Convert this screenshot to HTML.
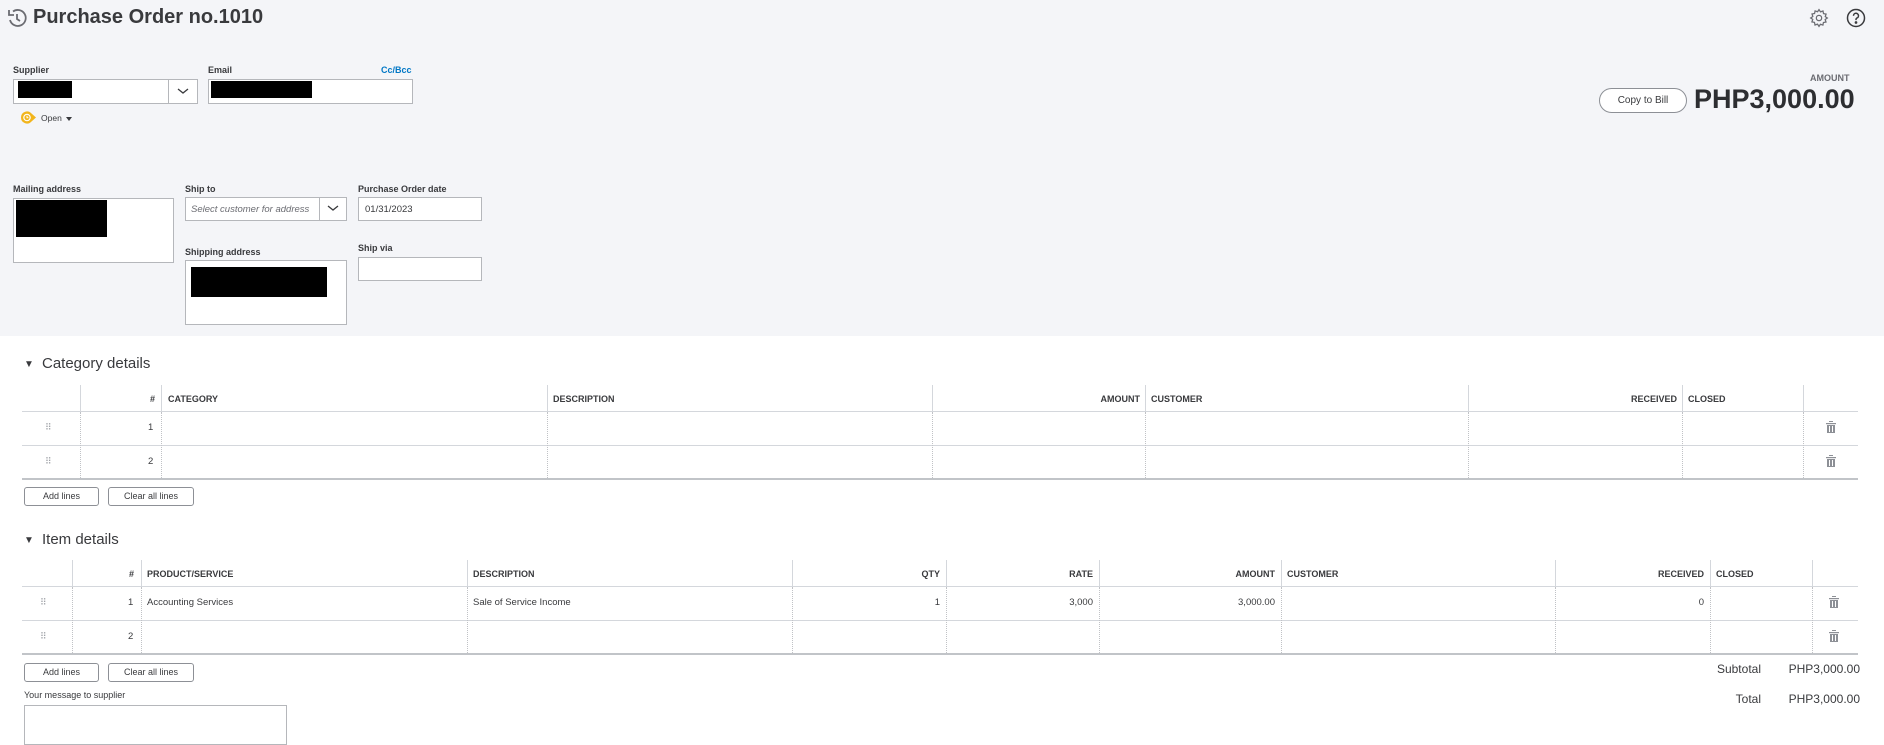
<!DOCTYPE html>
<html><head><meta charset="utf-8"><style>
*{box-sizing:border-box;margin:0;padding:0}
body{width:1884px;height:731px;overflow:hidden;background:#fff;font-family:"Liberation Sans",sans-serif;color:#393a3d;position:relative}
.a{position:absolute}
.band{left:0;top:0;width:1884px;height:336px;background:#f4f5f8}
.lbl{font-size:9px;font-weight:bold;color:#393a3d}
.box{background:#fff;border:1px solid #b5b7bb}
.blk{background:#000}
.btn{border:1px solid #8d9096;border-radius:3px;background:#fff;font-size:9px;text-align:center;line-height:17px;color:#393a3d}
.h{font-size:9px;font-weight:bold;color:#393a3d}
.c{font-size:9.5px;color:#393a3d}
.vl{border-left:1px dotted #c0c2c6;width:0}
.vh{border-left:1px solid #d4d7dc;width:0}
.hl{height:1px;background:#d4d7dc}
.tl{height:2px;background:#c1c4c8}
.sec{font-size:15px;color:#393a3d}
.tri{font-size:10px}
.drag{font-size:9px;color:#a0a3a8;letter-spacing:-1px}
</style></head><body>
<div class="a band"></div>
<svg class="a" style="left:6px;top:7px" width="22" height="22" viewBox="0 0 22 22" fill="none" stroke="#6b6c72" stroke-width="1.8"><path d="M4 13a8 8 0 1 0 3-8.5"/><path d="M3 3v5h5" /><path d="M11 7v5l3 2"/></svg>
<div class="a" style="left:33px;top:6px;font-size:20px;font-weight:bold;color:#393a3d">Purchase Order no.1010</div>
<svg class="a" style="left:1809px;top:8px" width="20" height="20" viewBox="0 0 24 24" fill="none" stroke="#6b6c72" stroke-width="1.5"><circle cx="12" cy="12" r="3.2"/><path d="M12 2l1.8 2.6 3-1 .6 3.1 3.1.6-1 3L22 12l-2.6 1.8 1 3-3.1.6-.6 3.1-3-1L12 22l-1.8-2.6-3 1-.6-3.1-3.1-.6 1-3L2 12l2.6-1.8-1-3 3.1-.6.6-3.1 3 1z"/></svg>
<svg class="a" style="left:1846px;top:8px" width="20" height="20" viewBox="0 0 20 20" fill="none" stroke="#393a3d" stroke-width="1.5"><circle cx="10" cy="10" r="8.5"/><path d="M7.5 7.8a2.5 2.5 0 1 1 3.3 2.3c-.6.3-.8.7-.8 1.4v.6"/><circle cx="10" cy="14.5" r=".6" fill="#393a3d"/></svg>

<div class="a lbl" style="left:13px;top:65px">Supplier</div>
<div class="a box" style="left:13px;top:79px;width:185px;height:25px"></div>
<div class="a" style="left:168px;top:80px;width:1px;height:23px;background:#b5b7bb"></div>
<svg class="a" style="left:176px;top:86px" width="14" height="10" viewBox="0 0 14 10" fill="none" stroke="#393a3d" stroke-width="1.3"><path d="M2 3l5 4 5-4"/></svg>
<div class="a blk" style="left:18px;top:81px;width:54px;height:17px"></div>
<div class="a lbl" style="left:208px;top:65px">Email</div>
<div class="a" style="left:381px;top:65px;font-size:9px;font-weight:bold;color:#0077c5">Cc/Bcc</div>
<div class="a box" style="left:208px;top:79px;width:205px;height:25px"></div>
<div class="a blk" style="left:211px;top:81px;width:101px;height:17px"></div>
<svg class="a" style="left:19px;top:110px" width="18" height="15" viewBox="0 0 18 15"><path d="M2 7.5a6 6 0 0 1 10.5-4L17 7.5l-4.5 4A6 6 0 0 1 2 7.5z" fill="#f2b51c"/><circle cx="8" cy="7.5" r="3.2" fill="none" stroke="#fff" stroke-width="1.2"/><path d="M8 5.8v1.9h1.4" stroke="#fff" stroke-width="1" fill="none"/></svg>
<div class="a" style="left:41px;top:113px;font-size:8.5px;color:#393a3d">Open</div>
<div class="a" style="left:66px;top:117px;border:3px solid transparent;border-top:4px solid #393a3d"></div>

<div class="a" style="left:1810px;top:73px;font-size:9px;font-weight:bold;color:#6b6c72">AMOUNT</div>
<div class="a" style="left:1599px;top:88px;width:88px;height:25px;border:1px solid #8d9096;border-radius:13px;background:#fff;font-size:10px;text-align:center;line-height:23px;color:#393a3d">Copy to Bill</div>
<div class="a" style="left:1694px;top:84px;font-size:27px;font-weight:bold;color:#2d2e31">PHP3,000.00</div>

<div class="a lbl" style="left:13px;top:184px">Mailing address</div>
<div class="a box" style="left:13px;top:198px;width:161px;height:65px"></div>
<div class="a blk" style="left:16px;top:200px;width:91px;height:37px"></div>
<div class="a lbl" style="left:185px;top:184px">Ship to</div>
<div class="a box" style="left:185px;top:197px;width:162px;height:24px"></div>
<div class="a" style="left:191px;top:204px;font-size:9.5px;font-style:italic;color:#6b6c72">Select customer for address</div>
<div class="a" style="left:319px;top:198px;width:1px;height:22px;background:#b5b7bb"></div>
<svg class="a" style="left:326px;top:203px" width="14" height="10" viewBox="0 0 14 10" fill="none" stroke="#393a3d" stroke-width="1.3"><path d="M2 3l5 4 5-4"/></svg>
<div class="a lbl" style="left:358px;top:184px">Purchase Order date</div>
<div class="a box" style="left:358px;top:197px;width:124px;height:24px"></div>
<div class="a" style="left:365px;top:204px;font-size:9.5px;color:#393a3d">01/31/2023</div>
<div class="a lbl" style="left:185px;top:247px">Shipping address</div>
<div class="a box" style="left:185px;top:260px;width:162px;height:65px"></div>
<div class="a blk" style="left:191px;top:267px;width:136px;height:30px"></div>
<div class="a lbl" style="left:358px;top:243px">Ship via</div>
<div class="a box" style="left:358px;top:257px;width:124px;height:24px"></div>

<!-- Category -->
<div class="a tri" style="left:24px;top:359px">▼</div>
<div class="a sec" style="left:42px;top:355px">Category details</div>
<div class="a hl" style="left:22px;top:411px;width:1836px"></div>
<div class="a hl" style="left:22px;top:445px;width:1836px"></div>
<div class="a tl" style="left:22px;top:478px;width:1836px"></div>
<div class="a vh" style="left:80px;top:385px;height:26px"></div>
<div class="a vh" style="left:161px;top:385px;height:26px"></div>
<div class="a vh" style="left:547px;top:385px;height:26px"></div>
<div class="a vh" style="left:932px;top:385px;height:26px"></div>
<div class="a vh" style="left:1145px;top:385px;height:26px"></div>
<div class="a vh" style="left:1468px;top:385px;height:26px"></div>
<div class="a vh" style="left:1682px;top:385px;height:26px"></div>
<div class="a vh" style="left:1803px;top:385px;height:26px"></div>
<div class="a vl" style="left:80px;top:412px;height:66px"></div>
<div class="a vl" style="left:161px;top:412px;height:66px"></div>
<div class="a vl" style="left:547px;top:412px;height:66px"></div>
<div class="a vl" style="left:932px;top:412px;height:66px"></div>
<div class="a vl" style="left:1145px;top:412px;height:66px"></div>
<div class="a vl" style="left:1468px;top:412px;height:66px"></div>
<div class="a vl" style="left:1682px;top:412px;height:66px"></div>
<div class="a vl" style="left:1803px;top:412px;height:66px"></div>
<div class="a h" style="left:150px;top:394px">#</div>
<div class="a h" style="left:168px;top:394px">CATEGORY</div>
<div class="a h" style="left:553px;top:394px">DESCRIPTION</div>
<div class="a h" style="left:1080px;top:394px;width:60px;text-align:right">AMOUNT</div>
<div class="a h" style="left:1151px;top:394px">CUSTOMER</div>
<div class="a h" style="left:1600px;top:394px;width:77px;text-align:right">RECEIVED</div>
<div class="a h" style="left:1688px;top:394px">CLOSED</div>
<div class="a drag" style="left:45px;top:422px">⠿</div>
<div class="a c" style="left:148px;top:422px">1</div>
<div class="a drag" style="left:45px;top:456px">⠿</div>
<div class="a c" style="left:148px;top:456px">2</div>
<svg class="a" style="left:1826px;top:421px" width="10" height="12" viewBox="0 0 10 12" fill="#8d9096"><rect x="3" y="0" width="4" height="1"/><rect x="0" y="2" width="10" height="1.2"/><rect x="1" y="4" width="8" height="8"/><rect x="3" y="5" width="1" height="6" fill="#fff"/><rect x="6" y="5" width="1" height="6" fill="#fff"/></svg>
<svg class="a" style="left:1826px;top:455px" width="10" height="12" viewBox="0 0 10 12" fill="#8d9096"><rect x="3" y="0" width="4" height="1"/><rect x="0" y="2" width="10" height="1.2"/><rect x="1" y="4" width="8" height="8"/><rect x="3" y="5" width="1" height="6" fill="#fff"/><rect x="6" y="5" width="1" height="6" fill="#fff"/></svg>
<div class="a btn" style="left:24px;top:487px;width:75px;height:19px">Add lines</div>
<div class="a btn" style="left:108px;top:487px;width:86px;height:19px">Clear all lines</div>

<!-- Item -->
<div class="a tri" style="left:24px;top:535px">▼</div>
<div class="a sec" style="left:42px;top:531px">Item details</div>
<div class="a hl" style="left:22px;top:586px;width:1836px"></div>
<div class="a hl" style="left:22px;top:620px;width:1836px"></div>
<div class="a tl" style="left:22px;top:653px;width:1836px"></div>
<div class="a vh" style="left:72px;top:560px;height:26px"></div>
<div class="a vh" style="left:141px;top:560px;height:26px"></div>
<div class="a vh" style="left:467px;top:560px;height:26px"></div>
<div class="a vh" style="left:792px;top:560px;height:26px"></div>
<div class="a vh" style="left:946px;top:560px;height:26px"></div>
<div class="a vh" style="left:1099px;top:560px;height:26px"></div>
<div class="a vh" style="left:1281px;top:560px;height:26px"></div>
<div class="a vh" style="left:1555px;top:560px;height:26px"></div>
<div class="a vh" style="left:1710px;top:560px;height:26px"></div>
<div class="a vh" style="left:1812px;top:560px;height:26px"></div>
<div class="a vl" style="left:72px;top:587px;height:66px"></div>
<div class="a vl" style="left:141px;top:587px;height:66px"></div>
<div class="a vl" style="left:467px;top:587px;height:66px"></div>
<div class="a vl" style="left:792px;top:587px;height:66px"></div>
<div class="a vl" style="left:946px;top:587px;height:66px"></div>
<div class="a vl" style="left:1099px;top:587px;height:66px"></div>
<div class="a vl" style="left:1281px;top:587px;height:66px"></div>
<div class="a vl" style="left:1555px;top:587px;height:66px"></div>
<div class="a vl" style="left:1710px;top:587px;height:66px"></div>
<div class="a vl" style="left:1812px;top:587px;height:66px"></div>
<div class="a h" style="left:129px;top:569px">#</div>
<div class="a h" style="left:147px;top:569px">PRODUCT/SERVICE</div>
<div class="a h" style="left:473px;top:569px">DESCRIPTION</div>
<div class="a h" style="left:880px;top:569px;width:60px;text-align:right">QTY</div>
<div class="a h" style="left:1033px;top:569px;width:60px;text-align:right">RATE</div>
<div class="a h" style="left:1215px;top:569px;width:60px;text-align:right">AMOUNT</div>
<div class="a h" style="left:1287px;top:569px">CUSTOMER</div>
<div class="a h" style="left:1626px;top:569px;width:78px;text-align:right">RECEIVED</div>
<div class="a h" style="left:1716px;top:569px">CLOSED</div>
<div class="a drag" style="left:40px;top:597px">⠿</div>
<div class="a c" style="left:128px;top:597px">1</div>
<div class="a c" style="left:147px;top:597px">Accounting Services</div>
<div class="a c" style="left:473px;top:597px">Sale of Service Income</div>
<div class="a c" style="left:880px;top:597px;width:60px;text-align:right">1</div>
<div class="a c" style="left:1033px;top:597px;width:60px;text-align:right">3,000</div>
<div class="a c" style="left:1215px;top:597px;width:60px;text-align:right">3,000.00</div>
<div class="a c" style="left:1640px;top:597px;width:64px;text-align:right">0</div>
<div class="a drag" style="left:40px;top:631px">⠿</div>
<div class="a c" style="left:128px;top:631px">2</div>
<svg class="a" style="left:1829px;top:596px" width="10" height="12" viewBox="0 0 10 12" fill="#8d9096"><rect x="3" y="0" width="4" height="1"/><rect x="0" y="2" width="10" height="1.2"/><rect x="1" y="4" width="8" height="8"/><rect x="3" y="5" width="1" height="6" fill="#fff"/><rect x="6" y="5" width="1" height="6" fill="#fff"/></svg>
<svg class="a" style="left:1829px;top:630px" width="10" height="12" viewBox="0 0 10 12" fill="#8d9096"><rect x="3" y="0" width="4" height="1"/><rect x="0" y="2" width="10" height="1.2"/><rect x="1" y="4" width="8" height="8"/><rect x="3" y="5" width="1" height="6" fill="#fff"/><rect x="6" y="5" width="1" height="6" fill="#fff"/></svg>
<div class="a btn" style="left:24px;top:663px;width:75px;height:19px">Add lines</div>
<div class="a btn" style="left:108px;top:663px;width:86px;height:19px">Clear all lines</div>
<div class="a" style="left:1680px;top:662px;width:81px;text-align:right;font-size:12px">Subtotal</div>
<div class="a" style="left:1770px;top:662px;width:90px;text-align:right;font-size:12px">PHP3,000.00</div>
<div class="a" style="left:1680px;top:692px;width:81px;text-align:right;font-size:12px">Total</div>
<div class="a" style="left:1770px;top:692px;width:90px;text-align:right;font-size:12px">PHP3,000.00</div>
<div class="a" style="left:24px;top:690px;font-size:9px">Your message to supplier</div>
<div class="a box" style="left:24px;top:705px;width:263px;height:40px"></div>
</body></html>
